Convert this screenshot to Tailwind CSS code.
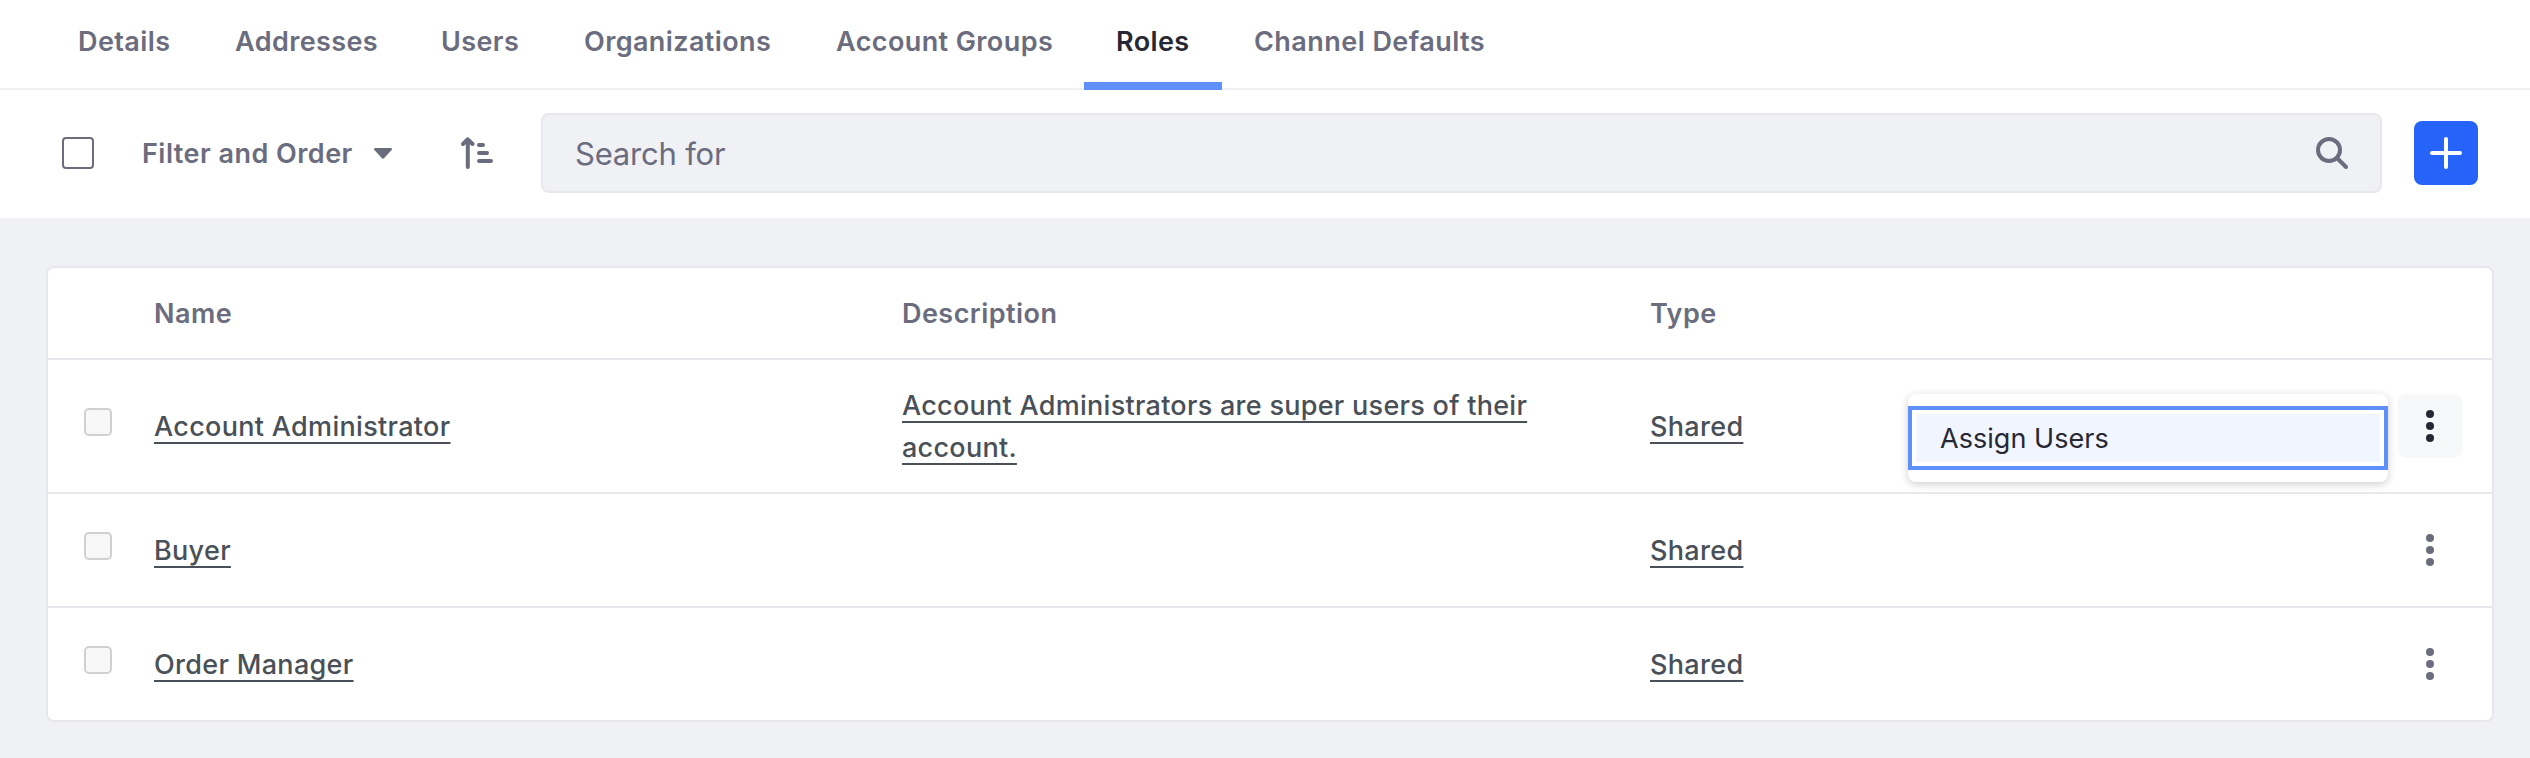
<!DOCTYPE html>
<html lang="en">
<head>
<meta charset="utf-8">
<title>Roles</title>
<script src="https://cdn.jsdelivr.net/npm/@tailwindcss/browser@4"></script>
</head>
<body class="h-[758px] overflow-hidden bg-[#f0f1f5] font-[Inter,sans-serif] text-[27px] leading-[42px] text-[#6b6c7e]">

<nav class="flex h-[90px] border-b-2 border-[#f0f1f5] bg-white pl-[46px] font-semibold tracking-[0.4px] whitespace-nowrap">
  <a class="h-[90px] w-[158px] px-8 pt-[21px]">Details</a>
  <a class="h-[90px] w-[205px] pl-[31px] pt-[21px]">Addresses</a>
  <a class="h-[90px] w-[142px] px-8 pt-[21px]">Users</a>
  <a class="h-[90px] w-[253px] pl-[33px] pt-[21px]">Organizations</a>
  <a class="h-[90px] w-[280px] px-8 pt-[21px]">Account Groups</a>
  <a class="h-[90px] w-[138px] border-b-8 border-[#5f8ff8] px-8 pt-[21px] text-[#272833]">Roles</a>
  <a class="h-[90px] w-[296px] px-8 pt-[21px] tracking-[0.45px]">Channel Defaults</a>
</nav>

<div class="flex h-32 items-center bg-white pr-[52px] pb-[2px] pl-[62px]">
  <span class="size-8 rounded-[4px] border-2 border-[#6b6c7e] bg-white"></span>
  <button class="ml-12 flex w-[250px] items-center justify-between font-semibold tracking-[0.47px] whitespace-nowrap">
    <span class="pt-[2px]">Filter and Order</span>
    <svg class="h-[11px] w-[18px]" viewBox="0 0 18 11" fill="#6b6c7e"><path d="M1.2 0h15.6c1 0 1.5 1.200.8 2L10 10.200c-.6.6-1.400.6-2 0L.4 2C-.3 1.200.2 0 1.200 0z"/></svg>
  </button>
  <svg class="ml-[69px] size-8" viewBox="0 0 32 32" fill="none" stroke="#6b6c7e" stroke-width="4" stroke-linecap="round" stroke-linejoin="round"><path d="M6.800 30V3M2 7l4.800-4.700L11.500 7M18 8h4M18 16h8M18 24h12"/></svg>
  <div class="ml-12 flex h-20 w-[1841px] items-center justify-between rounded-lg border-2 border-[#e7e7ed] bg-[#f0f1f5] pr-8 pl-8">
    <span class="pt-[2px] text-[31px] tracking-[-0.2px]">Search for</span>
    <svg class="size-8" viewBox="0 0 32 32" fill="none" stroke="#6b6c7e" stroke-width="4" stroke-linecap="round"><circle cx="13" cy="13" r="11"/><path d="M21.500 21.500L30 30"/></svg>
  </div>
  <button class="ml-8 flex size-16 items-center justify-center rounded-lg bg-[#2563f9]">
    <svg class="size-8" viewBox="0 0 32 32" stroke="#fff" stroke-width="4" stroke-linecap="round"><path d="M16 2v28M2 16h28"/></svg>
  </button>
</div>

<main class="px-[46px] pt-12">
  <div class="w-[2448px] rounded-lg border-2 border-[#e7e7ed] bg-white font-medium tracking-[0.32px] text-[#495057]">
    <div class="grid h-[92px] grid-cols-[106px_748px_748px_748px_64px] items-center border-b-2 border-[#e7e7ed] pt-[2px] font-semibold tracking-[0.45px] text-[#6b6c7e]">
      <span></span><span>Name</span><span>Description</span><span>Type</span>
    </div>

    <div class="grid h-[134px] grid-cols-[106px_748px_748px_748px_64px] items-center border-b-2 border-[#e7e7ed]">
      <div class="pb-2 pl-9"><span class="block size-7 rounded-[5px] border-2 border-[#d0d0d0] bg-[#f8f8f8]"></span></div>
      <div class="pt-[2px]"><a class="underline decoration-2 underline-offset-[6px] [text-decoration-skip-ink:none]">Account Administrator</a></div>
      <div class="pt-[2px] pr-16 tracking-[0.28px]"><a class="underline decoration-2 underline-offset-[6px] [text-decoration-skip-ink:none]">Account Administrators are super users of their account.</a></div>
      <div class="pt-[2px]"><a class="underline decoration-2 underline-offset-[6px] [text-decoration-skip-ink:none]">Shared</a></div>
      <div class="relative">
        <button class="flex size-16 items-center justify-center rounded-lg bg-[#f7f8f9]">
          <svg class="size-8" viewBox="0 0 32 32" fill="#272833"><circle cx="16" cy="4" r="4"/><circle cx="16" cy="16" r="4"/><circle cx="16" cy="28" r="4"/></svg>
        </button>
        <div class="absolute top-0 right-[74px] w-[480px] rounded-lg bg-white py-3 shadow-[0_2px_8px_rgba(0,0,0,0.2)]">
          <div class="border-4 border-[#5f8ff8] bg-white p-1">
            <div class="flex h-12 items-center bg-[#f0f5ff] pt-[2px] pl-6 font-normal tracking-[0.05px] text-[#272833]">Assign Users</div>
          </div>
        </div>
      </div>
    </div>

    <div class="grid h-[114px] grid-cols-[106px_748px_748px_748px_64px] items-center border-b-2 border-[#e7e7ed]">
      <div class="pb-2 pl-9"><span class="block size-7 rounded-[5px] border-2 border-[#d0d0d0] bg-[#f8f8f8]"></span></div>
      <div class="pt-[2px]"><a class="underline decoration-2 underline-offset-[6px] [text-decoration-skip-ink:none]">Buyer</a></div>
      <div></div>
      <div class="pt-[2px]"><a class="underline decoration-2 underline-offset-[6px] [text-decoration-skip-ink:none]">Shared</a></div>
      <button class="flex size-16 items-center justify-center">
        <svg class="size-8" viewBox="0 0 32 32" fill="#6b6c7e"><circle cx="16" cy="4" r="4"/><circle cx="16" cy="16" r="4"/><circle cx="16" cy="28" r="4"/></svg>
      </button>
    </div>

    <div class="grid h-[112px] grid-cols-[106px_748px_748px_748px_64px] items-center">
      <div class="pb-2 pl-9"><span class="block size-7 rounded-[5px] border-2 border-[#d0d0d0] bg-[#f8f8f8]"></span></div>
      <div class="pt-[2px]"><a class="underline decoration-2 underline-offset-[6px] [text-decoration-skip-ink:none]">Order Manager</a></div>
      <div></div>
      <div class="pt-[2px]"><a class="underline decoration-2 underline-offset-[6px] [text-decoration-skip-ink:none]">Shared</a></div>
      <button class="flex size-16 items-center justify-center">
        <svg class="size-8" viewBox="0 0 32 32" fill="#6b6c7e"><circle cx="16" cy="4" r="4"/><circle cx="16" cy="16" r="4"/><circle cx="16" cy="28" r="4"/></svg>
      </button>
    </div>
  </div>
</main>
</body>
</html>
